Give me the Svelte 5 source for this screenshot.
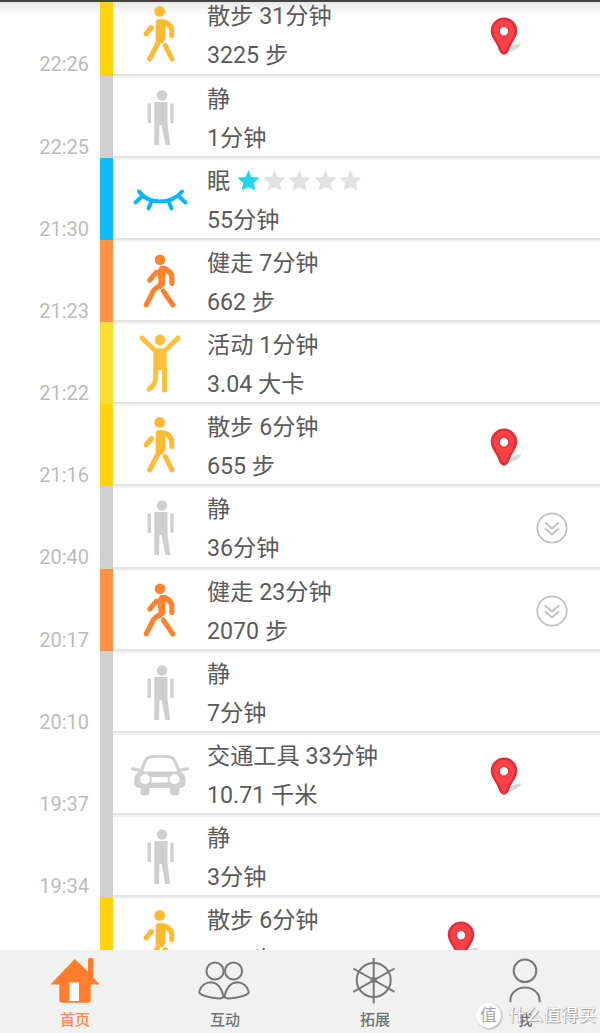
<script>
  // Activities of the day, latest first
  const entries = [
    { time: "22:26", type: "walk", title: "散步 31分钟", detail: "3225 步", pin: true },
    { time: "22:25", type: "still", title: "静", detail: "1分钟" },
    { time: "21:30", type: "sleep", title: "眠", detail: "55分钟", stars: 1 },
    { time: "21:23", type: "brisk", title: "健走 7分钟", detail: "662 步" },
    { time: "21:22", type: "active", title: "活动 1分钟", detail: "3.04 大卡" },
    { time: "21:16", type: "walk", title: "散步 6分钟", detail: "655 步", pin: true },
    { time: "20:40", type: "still", title: "静", detail: "36分钟", more: true },
    { time: "20:17", type: "brisk", title: "健走 23分钟", detail: "2070 步", more: true },
    { time: "20:10", type: "still", title: "静", detail: "7分钟" },
    { time: "19:37", type: "car", title: "交通工具 33分钟", detail: "10.71 千米", pin: true },
    { time: "19:34", type: "still", title: "静", detail: "3分钟" },
    { time: "", type: "walk", title: "散步 6分钟", detail: "655 步", pin: true, near: true },
  ];

  const tabs = [
    { icon: "home", label: "首页" },
    { icon: "friends", label: "互动" },
    { icon: "wheel", label: "拓展" },
    { icon: "me", label: "我" },
  ];

  let current = $state("home");
</script>

<div class="screen">
  <main class="timeline">
    {#each entries as entry}
      <div class="row {entry.type}">
        <div class="time">{entry.time}</div>
        <div class="bar"></div>
        <div class="card">
          <svg class="activity" viewBox="0 0 94 82">
            {#if entry.type === "walk"}
              <circle cx="46.7" cy="18.4" r="5.4" />
              <path d="M42.7 28.5 Q42.700 26.300 45 26.300 H51.500 Q55 27 58.500 30.500 Q61.300 33.500 61.300 37 V43 Q61 45.300 58.800 45.300 Q56.500 45.300 56.300 43 V37 Q55.500 34 52.500 32.500 V45.500 L49.500 50.500 L42.700 48.500 Z" />
              <path class="line" d="M38.500 34.500 L33 40.800" />
              <path class="line" d="M46 48 L36.600 66 M52.300 52.500 L59 66" />
            {:else if entry.type === "brisk"}
              <circle cx="47" cy="19.8" r="5.3" />
              <path d="M44.300 30.500 L47.500 26 H53 Q56 27.500 59 30.500 Q61.500 33.500 61.500 36.500 V43.500 Q61.200 46 59 46 Q56.500 46 56.300 43.500 V37 Q55.500 34.500 52.300 32 V44.500 L48 49 L43.500 49 L45.500 42 Z" />
              <path class="line" d="M43 32.500 L36.700 40.200" />
              <path class="line" d="M46.500 45.500 L40.800 50 L33.200 65 M50.300 51 L59.800 65" />
            {:else if entry.type === "still"}
              <circle cx="49" cy="19.5" r="5.2" />
              <path d="M41.300 26 H54.500 V48 L57.200 69 H52.500 L48.500 49 H46.500 L46 69 H41.300 Z" />
              <path d="M34.600 27.500 H38 V47 H34.600 Z M57.300 27.500 H60.600 V47 H57.300 Z" />
            {:else if entry.type === "active"}
              <circle cx="47" cy="18" r="5.4" />
              <path d="M40.300 26.300 H53.700 V48 H40.300 Z" />
              <path class="line" d="M29 16 L42 28.500 M65 16 L52 28.500" />
              <path class="line" d="M42.700 47 V56 Q42 63 36 67 M51.500 47 V68" />
            {:else if entry.type === "sleep"}
              <path class="line lash" d="M26 33.500 Q33 43.500 47 43.500 Q61 43.500 69 33.500 M29.500 38 L22.500 44.500 M38.500 43 L35.500 50.500 M55.500 43 L58.500 50.500 M65.500 38 L72.500 44.500" />
            {:else}
              <path class="roof" d="M28 40 L32 28 Q33.500 24.500 38 23.800 Q47 22.500 56 23.800 Q60.500 24.500 62 28 L66.500 40" />
              <path class="mirror" d="M19.500 35.700 L26 37 M74.500 35.700 L68 37" />
              <path fill-rule="evenodd" d="M26 38.500 H68 Q73 42 72.500 49 Q72.500 55 66.500 55 V60 Q65.500 62.500 61.500 62.500 Q57.500 62.500 57 60 V55 H36.500 V60 Q36 62.500 32 62.500 Q28 62.500 27.500 60 V55 Q21 55 21 49 Q21 42 26 38.500 Z M38.500 44 V49.500 H54.800 V44 Z" />
              <circle class="lamp" cx="32" cy="46.200" r="5" />
              <circle class="lamp" cx="61.500" cy="46.200" r="5" />
            {/if}
          </svg>

          <div class="text">
            <div class="title">
              {entry.title}
              {#if entry.stars}
                <span class="stars">
                  {#each [1, 2, 3, 4, 5] as n}
                    <svg class="star" class:lit={n <= entry.stars} viewBox="0 0 24 24">
                      <path d="M12 1 L15 8.300 L23.500 9 L17.500 14.700 L19.200 22.500 L12 19 L4.800 22.500 L6.500 14.700 L0.500 9 L9 8.300 Z" />
                    </svg>
                  {/each}
                </span>
              {/if}
            </div>
            <div class="detail">{entry.detail}</div>
          </div>

          {#if entry.pin}
            <svg class="pin" class:near={entry.near} viewBox="0 0 36 40">
              <path class="shadow" d="M15 36 Q19 27 30 26.500 Q33 27 27 31.500 Q21 35 15 36 Z" />
              <path class="drop" d="M14 36.500 C11.500 36.500 10.500 33.500 9 29.500 C6.500 23.500 2 20 2 13.800 A12 12 0 0 1 26 13.800 C26 20 21.500 23.500 19 29.500 C17.500 33.500 16.500 36.500 14 36.500 Z" />
              <circle class="hole" cx="14" cy="14.300" r="4.800" />
            </svg>
          {/if}
          {#if entry.more}
            <svg class="more" viewBox="0 0 32 32">
              <circle cx="16" cy="16" r="14.700" />
              <path d="M9 10.500 L16 16.500 L23 10.500 M9 16.500 L16 22.500 L23 16.500" />
            </svg>
          {/if}
        </div>
      </div>
    {/each}
  </main>

  <nav class="tabs">
    {#each tabs as tab}
      <button class="tab" class:current={current === tab.icon} onclick={() => (current = tab.icon)}>
        <svg viewBox="0 0 60 52">
          {#if tab.icon === "home"}
            <path class="solid" fill-rule="evenodd" d="M29.700 4 L43 16.500 V4.500 Q43 2.700 45.800 2.700 Q48.500 2.700 48.500 4.500 V22.500 L54.500 29.500 H45.700 V45 Q45.700 47.700 43 47.700 H17 Q14.300 47.700 14.300 45 V29.500 H5.500 Z M24.700 27.700 V46 H34 V27.700 Z" />
            <path class="door" d="M24.700 27.700 H34 V46 H24.700 Z" />
          {:else if tab.icon === "friends"}
            <circle cx="20" cy="16" r="8.600" />
            <circle cx="38.500" cy="16" r="8.600" />
            <path d="M4.500 36 Q7.500 27.500 16 27.300 Q25.500 28 28.500 41.500 Q28 43.800 22 43.300 Q9 42 5 38.500 Q4 37.500 4.500 36 Z" />
            <path d="M53.500 36 Q50.500 27.500 42 27.300 Q32.500 28 29.500 41.500 Q30 43.800 36 43.300 Q49 42 53 38.500 Q54 37.500 53.500 36 Z" />
          {:else if tab.icon === "wheel"}
            <circle cx="28.700" cy="25" r="17" />
            <path d="M28.700 3 V48.500 M8.300 13.500 L49.500 36.800 M49.500 13.500 L8.300 36.800" />
            <circle class="solid" cx="28.700" cy="25" r="3" />
          {:else}
            <circle cx="30" cy="15.700" r="11.300" />
            <path d="M15.400 47.300 V45 A14.600 12.500 0 0 1 44.600 45 V47.300" />
          {/if}
        </svg>
        <span>{tab.label}</span>
      </button>
    {/each}
  </nav>

  <div class="watermark">
    <span class="seal">值</span>
    <span>什么值得买</span>
  </div>
</div>

<style>
  :global(body) {
    background: #fff;
  }

  .screen {
    position: relative;
    display: flex;
    flex-direction: column;
    box-sizing: border-box;
    width: 600px;
    height: 1033px;
    border-top: 2px solid #444;
    overflow: hidden;
    font-family: Roboto, "Noto Sans CJK SC", sans-serif;
  }

  .timeline {
    flex: 1;
    min-height: 0;
    overflow: hidden;
    background: linear-gradient(#e9e9e9, #fff 14px);
  }

  .row {
    display: flex;
    height: 82.2px;
    --tint: #d0d0d0;
    --icon: #cfcfcf;
  }

  .row:first-child {
    margin-top: -8.7px;
  }

  .walk {
    --tint: #ffd310;
    --icon: #ffb932;
  }

  .brisk {
    --tint: #ff9248;
    --icon: #ff832e;
  }

  .active {
    --tint: #f9df31;
    --icon: #ffc13c;
  }

  .sleep {
    --tint: #10bcff;
    --icon: #0db5fb;
  }

  .time {
    box-sizing: border-box;
    width: 100px;
    padding: 59px 11px 0 0;
    font-size: 20px;
    line-height: 24px;
    text-align: right;
    color: #bcbcbc;
  }

  .bar {
    width: 13px;
    background: var(--tint);
  }

  .card {
    flex: 1;
    display: flex;
    box-sizing: border-box;
    border-top: 2px solid #f3f3f3;
    border-bottom: 2px solid #e3e3e3;
  }

  .activity {
    width: 94px;
    height: 82px;
    margin-top: -2px;
    fill: var(--icon);
  }

  .line {
    fill: none;
    stroke: var(--icon);
    stroke-width: 5;
    stroke-linecap: round;
    stroke-linejoin: round;
  }

  .lash {
    stroke-width: 4;
  }

  .roof,
  .mirror {
    fill: none;
    stroke: var(--icon);
    stroke-width: 3;
    stroke-linecap: round;
  }

  .lamp {
    fill: #fff;
  }

  .text {
    flex: 1;
    padding-top: 2px;
    font-size: 23.2px;
    line-height: 39px;
    color: #5b5b5b;
    white-space: nowrap;
  }

  .title {
    display: flex;
    align-items: center;
    height: 39px;
  }

  .detail {
    height: 39px;
  }

  .stars {
    display: flex;
    gap: 2.5px;
    margin: -2px 0 0 7px;
  }

  .star {
    width: 23px;
    height: 23px;
    fill: #e2e2e2;
  }

  .lit {
    fill: #1fd8ee;
  }

  .pin {
    width: 36px;
    height: 40px;
    margin: 21.5px 74px 0 0;
  }

  .near {
    margin-right: 117.5px;
  }

  .drop {
    fill: #fa4146;
    stroke: #dd2f3c;
    stroke-width: 2.6;
  }

  .hole {
    fill: #fff;
    stroke: #dd2f3c;
    stroke-width: 1.2;
  }

  .shadow {
    fill: #d5dad9;
  }

  .more {
    width: 32px;
    height: 32px;
    margin: 24px 32.5px 0 0;
    fill: none;
    stroke: #c2c2c2;
    stroke-width: 1.8;
  }

  .tabs {
    display: flex;
    height: 83px;
    background: #f1f1f1;
  }

  .tab {
    flex: 1;
    display: flex;
    flex-direction: column;
    align-items: center;
    padding: 5px 0 0;
    border: 0;
    background: none;
    font: 500 15px/20px Roboto, "Noto Sans CJK SC", sans-serif;
    color: #727272;
  }

  .tab svg {
    width: 60px;
    height: 52px;
    margin-bottom: 3px;
    fill: none;
    stroke: #777;
    stroke-width: 2;
  }

  .tab .solid {
    fill: #777;
    stroke: none;
  }

  .tab.current {
    color: #ff8746;
  }

  .tab.current .solid {
    fill: #ff7d2c;
  }

  .tab .door {
    fill: #fff;
    stroke: none;
  }

  .watermark {
    position: absolute;
    right: 4px;
    bottom: 5px;
    display: flex;
    align-items: center;
    gap: 7px;
    font-size: 17.6px;
    line-height: 25px;
    color: #fff;
    text-shadow: 1px 1px 1px #999, 0 0 1px #aaa;
  }

  .seal {
    width: 25px;
    height: 25px;
    border-radius: 50%;
    background: #fff;
    box-shadow: 1px 1px 2px #aaa;
    font-size: 17px;
    text-align: center;
    text-shadow: none;
    color: #aaa;
  }
</style>
